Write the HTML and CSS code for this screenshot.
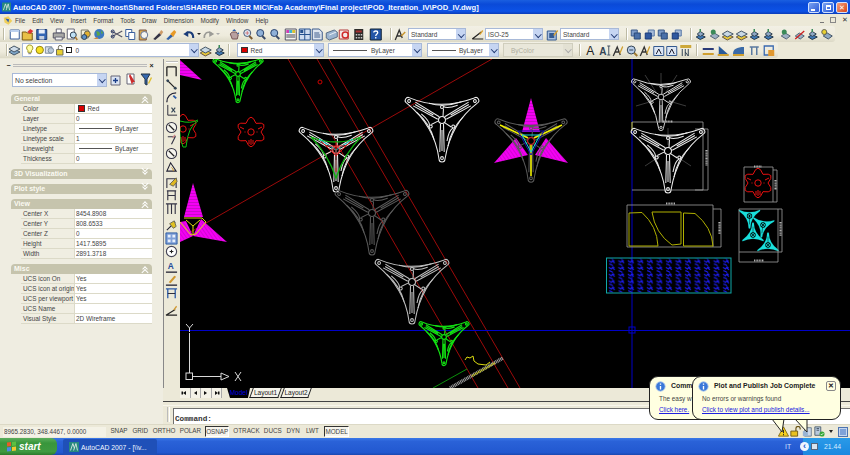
FILE: index.html
```html
<!DOCTYPE html>
<html lang="en">
<head>
<meta charset="utf-8">
<title>AutoCAD 2007</title>
<link rel="stylesheet" href="styles.css">
</head>
<body>
<svg class="defs" width="0" height="0">
  <defs>
    <symbol id="new" viewBox="0 0 13 13"><path d="M2 2h9v9H2z" fill="#fff" stroke="#3a5f9e"/><path d="M2 2h9v2H2z" fill="#bcd0ee"/></symbol>
    <symbol id="open" viewBox="0 0 13 13"><path d="M1 4h4l1 1h5v7H1z" fill="#e8c048" stroke="#7a5a10"/><path d="M6 4l3-3 3 2-3 3z" fill="#d33"/></symbol>
    <symbol id="save" viewBox="0 0 13 13"><path d="M1.500 1.500h10v10h-10z" fill="#3466b4" stroke="#1d3c78"/><path d="M3.500 1.500h6v4h-6z" fill="#e8eef8"/><path d="M4 8h5v3.500H4z" fill="#c5cfdf"/></symbol>
    <symbol id="plot" viewBox="0 0 13 13"><path d="M4 1h5v4H4z" fill="#fff" stroke="#667"/><path d="M1 5h11v5H1z" fill="#a9a9a6" stroke="#556"/><path d="M3 9h7v3H3z" fill="#eee" stroke="#667"/></symbol>
    <symbol id="prev" viewBox="0 0 13 13"><path d="M2 1h7v10H2z" fill="#fff" stroke="#667"/><circle cx="8" cy="7" r="3" fill="#bfe0f5" stroke="#345"/><path d="M10 9l2 3" stroke="#a73" stroke-width="1.500"/></symbol>
    <symbol id="pub" viewBox="0 0 13 13"><path d="M2 2h7v8H2z" fill="#f3f0d8" stroke="#776"/><circle cx="8" cy="6" r="3" fill="#e0b030" stroke="#665"/><circle cx="5" cy="9" r="2.500" fill="#5a90c8" stroke="#345"/></symbol>
    <symbol id="globe" viewBox="0 0 13 13"><circle cx="7" cy="6" r="5" fill="#3c78c0"/><path d="M4 3l3 1 1 3-3 1zM9 2l2 3-2 1z" fill="#5ca648"/><path d="M1 11l4-2 1 2z" fill="#c84"/></symbol>
    <symbol id="cut" viewBox="0 0 13 13"><path d="M1 3l11 6M1 9l11-6" stroke="#556" stroke-width="1.200"/><circle cx="2.500" cy="3.500" r="1.500" fill="none" stroke="#236"/><circle cx="2.500" cy="8.500" r="1.500" fill="none" stroke="#236"/></symbol>
    <symbol id="copy" viewBox="0 0 13 13"><path d="M1.500 1.500h6v7h-6z" fill="#fff" stroke="#3a5f9e"/><path d="M4.500 4.500h6v7h-6z" fill="#fff" stroke="#3a5f9e"/></symbol>
    <symbol id="paste" viewBox="0 0 13 13"><path d="M2 2h7v10H2z" fill="#d9a84c" stroke="#754"/><circle cx="7" cy="7" r="3.500" fill="#f4f4f0" stroke="#679"/></symbol>
    <symbol id="brush" viewBox="0 0 13 13"><path d="M2 11l6-6 2 2-6 5z" fill="#334"/><path d="M8 5l2-3 2 2-2 3z" fill="#c96"/></symbol>
    <symbol id="block" viewBox="0 0 13 13"><path d="M2 11l5-5 2 2-5 4z" fill="#2f5fa8"/><path d="M6 6l4-4 2 2-3 5z" fill="#e89a28"/></symbol>
    <symbol id="undo" viewBox="0 0 13 13"><path d="M11 10C11 5 8 3 4 5" fill="none" stroke="#1a3c78" stroke-width="2"/><path d="M1 6l5-3 0 6z" fill="#1a3c78"/></symbol>
    <symbol id="redo" viewBox="0 0 13 13"><path d="M2 10C2 5 5 3 9 5" fill="none" stroke="#9b9b96" stroke-width="1.600"/><path d="M12 6L7 3l0 6z" fill="#9b9b96"/></symbol>
    <symbol id="pan" viewBox="0 0 13 13"><path d="M3 6l2-2 4 0 2 3-1 4H5z" fill="#b8a0a0" stroke="#755"/><path d="M7 1l2 2H5zM11 4l1 2-2 0z" fill="#2f5fa8"/></symbol>
    <symbol id="zoom" viewBox="0 0 13 13"><circle cx="6" cy="5" r="3.500" fill="#dce8f4" stroke="#4a5a78"/><path d="M8 8l3 3" stroke="#7a5a30" stroke-width="2"/><path d="M4 5h4M6 3v4" stroke="#c44" stroke-width=".6"/></symbol>
    <symbol id="zoomb" viewBox="0 0 13 13"><circle cx="6" cy="5" r="3.500" fill="#8fb0d8" stroke="#29436e"/><path d="M8 8l3 3" stroke="#3a4a68" stroke-width="2"/></symbol>
    <symbol id="props" viewBox="0 0 13 13"><path d="M1 1h11v11H1z" fill="#f5f5f0" stroke="#556"/><path d="M2 2h3v3H2z" fill="#d23bb4"/><path d="M5 2h3v3H5z" fill="#3bb4d2"/><path d="M8 2h3v3H8z" fill="#d8c030"/><path d="M2 7h9M2 9h9" stroke="#445"/></symbol>
    <symbol id="grid" viewBox="0 0 13 13"><path d="M1 1h11v11H1z" fill="#cfdcf0" stroke="#26508e"/><path d="M6.500 1v11M1 6.500h11" stroke="#26508e"/><path d="M2 2h3v3H2z" fill="#26508e"/></symbol>
    <symbol id="sheet" viewBox="0 0 13 13"><path d="M1 1h7l3 3v8H1z" fill="#dfe6f0" stroke="#3d5a8a"/><path d="M3 5h5M3 7h6M3 9h6" stroke="#3d5a8a"/></symbol>
    <symbol id="set" viewBox="0 0 13 13"><path d="M1 5l8-3 3 2v5l-8 3-3-2z" fill="#9cb4d0" stroke="#5a6f88"/><path d="M4 7l7-3" stroke="#e8eef4"/></symbol>
    <symbol id="mark" viewBox="0 0 13 13"><path d="M1 2h9v9H1z" fill="#f4e8e8" stroke="#b03a3a"/><circle cx="7" cy="7" r="3" fill="none" stroke="#d02a2a" stroke-width="1.500"/></symbol>
    <symbol id="calc" viewBox="0 0 13 13"><path d="M2 1h9v11H2z" fill="#2d2d2a"/><path d="M3.500 2.500h6v2h-6z" fill="#a83030"/><path d="M3.500 6h1.500v1.500H3.500zM6 6h1.500v1.500H6zM8.500 6H10v1.500H8.500zM3.500 9h1.500v1.500H3.500zM6 9h1.500v1.500H6zM8.500 9H10v1.500H8.500z" fill="#ccc"/></symbol>
    <symbol id="help" viewBox="0 0 13 13"><path d="M1 1h11v11H1z" fill="#2456a8" stroke="#123"/><path d="M4.500 4.500C4.500 2.500 8.500 2.500 8.500 4.500 8.500 6 6.500 6 6.500 8M6.500 9v1.500" fill="none" stroke="#fff" stroke-width="1.300"/></symbol>
    <symbol id="tstyle" viewBox="0 0 13 13"><path d="M2 12L6 2l3 8M4 8h4" fill="none" stroke="#333" stroke-width="1.300"/><path d="M8 8l4-4" stroke="#c8942c" stroke-width="1.500"/></symbol>
    <symbol id="dstyle" viewBox="0 0 13 13"><path d="M1 11l9-7M1 11h11" stroke="#222" stroke-width="1.200"/><path d="M8 6l3-4 1 1-3 4z" fill="#d8a030"/></symbol>
    <symbol id="tbstyle" viewBox="0 0 13 13"><path d="M1 3h9v9H1z" fill="#a9c0e0" stroke="#345a90"/><path d="M3 5h5v5H3z" fill="#345a90"/><path d="M7 7l4-5 1 1-4 5z" fill="#d8a030"/></symbol>
    <symbol id="order" viewBox="0 0 13 13"><path d="M2 2h6v6H2z" fill="#7e9cc8" stroke="#3a5a8a"/><path d="M5 5h6v6H5z" fill="#4a70a8" stroke="#2a4a7a"/></symbol>
    <symbol id="order2" viewBox="0 0 13 13"><path d="M5 2h6v6H5z" fill="#a8bcd8" stroke="#5a7aa8"/><path d="M2 5h6v6H2z" fill="#2f58a0" stroke="#1a3a78"/></symbol>
    <symbol id="lyr" viewBox="0 0 13 13"><path d="M1 8l5-3 6 3-6 3z" fill="#7ea6c8" stroke="#456"/><path d="M1 5l5-3 6 3-6 3z" fill="#cfdce8" stroke="#456"/></symbol>
    <symbol id="lyr2" viewBox="0 0 13 13"><path d="M1 9l5-3 6 3-6 3z" fill="#e8c838" stroke="#654"/><path d="M1 6l5-3 6 3-6 3z" fill="#c8d8e4" stroke="#456"/></symbol>
    <symbol id="lyr3" viewBox="0 0 13 13"><path d="M2 9l4-2.500 5 2.500-5 2.500z" fill="#3f7ab8" stroke="#234"/><path d="M3 6l3-2.500 4 2.500-4 2.500z" fill="#8ea8c4" stroke="#345"/><path d="M6 1v3" stroke="#3a8a58" stroke-width="1.500"/></symbol>
    <symbol id="lyrg" viewBox="0 0 13 13"><path d="M2 8l4-3 5 3-4 3z" fill="#9db0c4" stroke="#567"/><circle cx="5" cy="4" r="2.500" fill="#3a8a58"/></symbol>
    <symbol id="lyrr" viewBox="0 0 13 13"><path d="M2 8l4-3 5 3-4 3z" fill="#9db0c4" stroke="#567"/><path d="M2 11l9-8" stroke="#d02020" stroke-width="1.300"/></symbol>
    <symbol id="lyry" viewBox="0 0 13 13"><path d="M3 8l4-3 5 3-4 3z" fill="#8ea8c4" stroke="#456"/><circle cx="4" cy="4" r="2.500" fill="#e8d030" stroke="#665"/></symbol>
    <symbol id="bulb" viewBox="0 0 9 13"><path d="M4.500 1a3.300 3.300 0 0 1 2 6v2h-4V7a3.300 3.300 0 0 1 2-6z" fill="#ffffa0" stroke="#9a9020"/><path d="M3 10.500h3" stroke="#667"/></symbol>
    <symbol id="sun" viewBox="0 0 10 13"><circle cx="5" cy="6.500" r="4" fill="#f6e020" stroke="#8a7a10"/></symbol>
    <symbol id="vp" viewBox="0 0 11 13"><path d="M1 3h7v7H1z" fill="#d8dfe8" stroke="#789"/><circle cx="7" cy="7" r="3" fill="#b8c8d8" stroke="#789"/></symbol>
    <symbol id="lock" viewBox="0 0 9 13"><path d="M1 6h7v6H1z" fill="#e8d030" stroke="#665"/><path d="M3 6V3.500a2 2 0 0 1 4 0" fill="none" stroke="#665"/></symbol>
    <symbol id="ta" viewBox="0 0 13 13"><text x="2" y="11" class="ic-t">A</text></symbol>
    <symbol id="tai" viewBox="0 0 13 13"><text x="1" y="11" class="ic-t ic-t-b">A</text><path d="M9 2h3M10.500 2v9M9 11h3" stroke="#456" fill="none"/></symbol>
    <symbol id="tae" viewBox="0 0 13 13"><path d="M2 12L6 3l3 8M4 8h4" fill="none" stroke="#333" stroke-width="1.300"/><path d="M8 9l3-7 1 1-3 7z" fill="#d0a030"/></symbol>
    <symbol id="tfind" viewBox="0 0 13 13"><circle cx="6" cy="6" r="4" fill="#b8cce8" stroke="#345"/><path d="M9 9l3 3" stroke="#a07a30" stroke-width="2"/><path d="M4 6h4" stroke="#345"/></symbol>
    <symbol id="tsc" viewBox="0 0 13 13"><path d="M1.500 2.500h10v9h-10z" fill="#dce6f4" stroke="#345a90"/><path d="M4 10l2.500-5 2.500 5" fill="none" stroke="#223"/></symbol>
    <symbol id="tjust" viewBox="0 0 13 13"><path d="M1 1h11v3H1z" fill="#cda83a"/><path d="M3 12V5M6 5v7M9 12V5" stroke="#345" fill="none"/><path d="M6 8l3 4" stroke="#345"/></symbol>
    <symbol id="dimb" viewBox="0 0 13 13"><path d="M1 4h11v2H1z" fill="#2a3a78"/><path d="M1 9h11v2H1z" fill="#d0a030"/></symbol>
    <symbol id="dimt" viewBox="0 0 13 13"><path d="M2 10V2l9 8z" fill="#2a5a98"/><path d="M1 10h11v2H1z" fill="#d0a030"/></symbol>
    <symbol id="dimu" viewBox="0 0 13 13"><path d="M1 10c0-5 4-7 11-7v7z" fill="#3a6aa8"/><path d="M1 10h11v2H1z" fill="#d0a030"/></symbol>
    <symbol id="dimg" viewBox="0 0 13 13"><path d="M2 3h9M4 3v8M9 3v8" stroke="#5a7aa0" stroke-width="1.500"/></symbol>
    <symbol id="dimo" viewBox="0 0 13 13"><path d="M2 2h9v9H2z" fill="none" stroke="#3a6ab0" stroke-width="1.300"/><path d="M6 6h6v6H6z" fill="#e09830"/></symbol>
    <symbol id="vd" viewBox="0 0 14 14"><path d="M2 2h10M2 12V2M12 12V2" fill="none" stroke="#222" stroke-width="1.400"/></symbol>
    <symbol id="va" viewBox="0 0 14 14"><path d="M2 2l10 10" stroke="#222" stroke-width="1.400"/><circle cx="3" cy="3" r="1.500" fill="#345"/><circle cx="11" cy="11" r="1.500" fill="#345"/></symbol>
    <symbol id="varc" viewBox="0 0 14 14"><path d="M2 12C2 6 6 2 12 2" fill="none" stroke="#223" stroke-width="1.400"/><path d="M9 5l3 3" stroke="#2a5aa8" stroke-width="2"/></symbol>
    <symbol id="vxy" viewBox="0 0 14 14"><path d="M3 1v11h10" fill="none" stroke="#223"/><path d="M7 4l4 5M11 4l-4 5" stroke="#345" stroke-width="1.200"/></symbol>
    <symbol id="vr" viewBox="0 0 14 14"><circle cx="7" cy="7" r="5.500" fill="#f6f5ee" stroke="#334" stroke-width="1.100"/><path d="M4 4l6 6" stroke="#222" stroke-width="1.300"/></symbol>
    <symbol id="vj" viewBox="0 0 14 14"><path d="M3 3l8 0-4 8" fill="none" stroke="#334" stroke-width="1.200"/><path d="M11 1l-3 3" stroke="#c88" stroke-width="1.500"/></symbol>
    <symbol id="vang" viewBox="0 0 14 14"><path d="M2 12h10L6 3z" fill="none" stroke="#223" stroke-width="1.200"/><path d="M9 12c0-2-1-3-2-4" fill="none" stroke="#c89020"/></symbol>
    <symbol id="vq" viewBox="0 0 14 14"><path d="M2 13V3h10v10" fill="none" stroke="#334" stroke-width="1.200"/><path d="M5 9l7-7 1 4-4 5z" fill="#e0b820" stroke="#665"/></symbol>
    <symbol id="vb" viewBox="0 0 14 14"><path d="M2 2h10M3 2v10M11 2v10M3 7h8" fill="none" stroke="#334" stroke-width="1.200"/></symbol>
    <symbol id="vc" viewBox="0 0 14 14"><path d="M1 2h12M3 2v11M7 2v11M11 2v11" fill="none" stroke="#334" stroke-width="1.200"/></symbol>
    <symbol id="vy" viewBox="0 0 14 14"><path d="M2 12L11 3" stroke="#223" stroke-width="1.200"/><path d="M5 5l5-3 2 6-3 2z" fill="#e0c020" stroke="#665"/></symbol>
    <symbol id="vbl" viewBox="0 0 14 14"><path d="M1 1h12v12H1z" fill="#7fa0d8" stroke="#2a5aa0"/><path d="M3 3h3v3H3zM8 3h3v3H8zM3 8h3v3H3zM8 8h3v3H8z" fill="#e8f0fc"/></symbol>
    <symbol id="vcen" viewBox="0 0 14 14"><circle cx="7" cy="7" r="5.500" fill="#fff" stroke="#445" stroke-width="1.200"/><path d="M5 7h4M7 5v4" stroke="#222" stroke-width="1.200"/></symbol>
    <symbol id="vtxt" viewBox="0 0 14 14"><text x="3" y="9" class="ic-t ic-t-blue">A</text><path d="M1 12h12" stroke="#223" stroke-width="1.400"/></symbol>
    <symbol id="vtol" viewBox="0 0 14 14"><path d="M1 12h12" stroke="#223" stroke-width="1.400"/><path d="M4 9l6-7 2 1-6 7z" fill="#d09830"/></symbol>
    <symbol id="vupd" viewBox="0 0 14 14"><path d="M1 2h12M3 2v10M11 2v10" fill="none" stroke="#2a5aa8" stroke-width="1.400"/><path d="M3 7h8" stroke="#223"/></symbol>
    <symbol id="vst" viewBox="0 0 14 14"><path d="M1 12l10-6M1 12h12" stroke="#222" stroke-width="1.300"/><path d="M9 6l3-4 1 1-3 4z" fill="#d09830"/></symbol>
    <symbol id="pickadd" viewBox="0 0 13 13"><path d="M1 3h9v9H1z" fill="#dbe4f2" stroke="#667"/><path d="M3 7.500h5M5.500 5v5" stroke="#1b3f88" stroke-width="1.300"/></symbol>
    <symbol id="qsel" viewBox="0 0 13 13"><path d="M2 1h7v10H2z" fill="#fff" stroke="#667"/><path d="M5 1l5 8-2 0-1 3-3-9z" fill="#cc2a2a"/></symbol>
    <symbol id="filter" viewBox="0 0 13 13"><path d="M1 1h9L7 6v6l-2-1V6z" fill="#3568b0" stroke="#234"/><path d="M8 10l3-6 1 1-3 6z" fill="#e0c030"/></symbol>
    <symbol id="warn" viewBox="0 0 13 13"><path d="M6.500 1l6 11H.5z" fill="#f6d020" stroke="#7a6210"/><path d="M6.500 4.500v4M6.500 9.500v1.500" stroke="#222" stroke-width="1.100"/></symbol>
    <symbol id="trlock" viewBox="0 0 13 13"><path d="M1 6h8v6H1z" fill="#e8c020" stroke="#665010"/><path d="M7 6V3a2.500 2.500 0 0 1 5 0v1" fill="none" stroke="#665010" stroke-width="1.300"/></symbol>
    <symbol id="trplot" viewBox="0 0 13 13"><path d="M3 2h8v10H3z" fill="#c9d6e8" stroke="#678"/><path d="M1 6h6v6H1z" fill="#98b4d4"/></symbol>
    <symbol id="trok" viewBox="0 0 13 13"><path d="M1 1h7v10H1z" fill="#b8c8dc" stroke="#456"/><path d="M3 3h3M3 5h3" stroke="#345"/><circle cx="9.500" cy="9.500" r="3" fill="#38a838"/><path d="M8 9.500l1 1 2-2" fill="none" stroke="#fff"/></symbol>
    <symbol id="info" viewBox="0 0 13 13"><circle cx="6.500" cy="6.500" r="5.500" fill="#3a78d8" stroke="#a8c4ee"/><path d="M6.500 3v1.500M6.500 6v4" stroke="#fff" stroke-width="1.600"/></symbol>
    <symbol id="acad" viewBox="0 0 13 13"><path d="M0 0h13v13H0z" fill="#27897f"/><path d="M2 11l3-9 2 6M6 11l3-9 2 9" fill="none" stroke="#e6efe8" stroke-width="1.100"/></symbol>
    <symbol id="acadm" viewBox="0 0 13 13"><path d="M1 3l6-2 5 6-5 5-5-3z" fill="#f0cf5a"/><path d="M3 4l5 1-1 4z" fill="#3464ac"/></symbol>
    <pattern id="hatch" width="3" height="3" patternUnits="userSpaceOnUse"><rect width="3" height="3" fill="#f400f4"/><path d="M0 1.500h3" stroke="#a010a0" stroke-width=".5"/></pattern>
    <pattern id="hatch2" width="3" height="3" patternUnits="userSpaceOnUse" patternTransform="rotate(55)"><rect width="3" height="3" fill="#f400f4"/><path d="M0 1.500h3" stroke="#a010a0" stroke-width=".4"/></pattern>
    <pattern id="nest" x="608" y="259.500" width="9.520" height="6.700" patternUnits="userSpaceOnUse"><path d="M.8 1.200l2.500 1.600 1-1.400 2.400 2.300M1.200 4.400l2.100.8 1.600 1M4.700.6l1.600 1.100" fill="none" stroke="#1c1cf0" stroke-width="1.100"/></pattern>
    <g id="arm">
      <path d="M-3 39A3 3 0 0 0 3 39Q9 3 35.300-16.900"/>
      <circle cy="38" r="1.400"/>
      <path d="M-2.200 32L-1.500 4M2.200 32L1.500 4M0 10V31"/>
      <circle cy="-13" r="1.500"/>
      <path d="M5 21Q7 10 11 8M1-3.500L1.500-11.500M6 26Q9 9 21-3"/>
    </g>
    <g id="star" fill="none" stroke="currentColor">
      <use href="#arm"/>
      <use href="#arm" transform="rotate(120)"/>
      <use href="#arm" transform="rotate(-120)"/>
      <circle r="3.500"/>
    </g>
    <g id="flower" fill="none" stroke="currentColor" stroke-width="1">
      <path d="M-5-8.660Q0-21 5-8.660Q18.200-10.500 10 0Q18.200 10.500 5 8.660Q0 21-5 8.660Q-18.200 10.500-10 0Q-18.200-10.500-5-8.660Z"/>
      <circle r="3.200"/>
      <path d="M0 7V13M-2 8V12M2 8V12M-11-5L-7-3M11-5L7-3M-6.500 0h1M5.500 0h1"/>
    </g>
    <g id="cstar" fill="#19e0dc" stroke="#19e0dc" stroke-width=".4">
      <path d="M-3 39A3 3 0 0 0 3 39Q3 6 35.300-16.900L35.300-21Q0-4-35.300-21L-35.300-16.900Q-3 6-3 39Z"/>
      <circle r="9" fill="#000" stroke="none"/>
      <circle r="5" fill="none" stroke-width="3"/>
      <path d="M0 5V28" stroke="#000" stroke-width="1.500"/>
    </g>
  </defs>
</svg>

<div class="app">
  <header class="titlebar">
    <svg class="title-icon"><use href="#acad"/></svg>
    <span class="title-text">AutoCAD 2007 - [\\vmware-host\Shared Folders\SHARED FOLDER MIC\Fab Academy\Final project\POD_Iteration_IV\POD_IV.dwg]</span>
    <div class="winbtns">
      <span class="winbtn"><i class="g-min"></i></span>
      <span class="winbtn"><i class="g-res"></i></span>
      <span class="winbtn winbtn-close">✕</span>
    </div>
  </header>

  <nav class="menubar">
    <svg class="menu-icon"><use href="#acadm"/></svg>
    <span class="mi m1">File</span><span class="mi">Edit</span><span class="mi">View</span><span class="mi">Insert</span><span class="mi">Format</span><span class="mi">Tools</span><span class="mi">Draw</span><span class="mi">Dimension</span><span class="mi">Modify</span><span class="mi">Window</span><span class="mi">Help</span>
    <div class="mdi"><i class="m-min"></i><i class="m-res"></i><span class="m-x">✕</span></div>
  </nav>

  <div class="tbrow tb1">
    <div class="tband tband1">
      <i class="handle"></i>
      <div class="g g-a"><svg class="ic"><use href="#new"/></svg><svg class="ic"><use href="#open"/></svg><svg class="ic"><use href="#save"/></svg></div>
      <div class="g g-b"><svg class="ic"><use href="#plot"/></svg><svg class="ic"><use href="#prev"/></svg><svg class="ic"><use href="#pub"/></svg><svg class="ic"><use href="#globe"/></svg></div>
      <div class="g g-c"><svg class="ic"><use href="#cut"/></svg><svg class="ic"><use href="#copy"/></svg><svg class="ic"><use href="#paste"/></svg><svg class="ic"><use href="#brush"/></svg><svg class="ic"><use href="#block"/></svg></div>
      <div class="g g-c"><svg class="ic"><use href="#undo"/></svg><i class="drop"></i><svg class="ic"><use href="#redo"/></svg><i class="drop drop-off"></i></div>
      <div class="g g-d"><svg class="ic"><use href="#pan"/></svg><svg class="ic"><use href="#zoom"/></svg><svg class="ic"><use href="#zoomb"/></svg><svg class="ic"><use href="#zoomb"/></svg></div>
      <div class="g g-e"><svg class="ic"><use href="#props"/></svg><svg class="ic"><use href="#grid"/></svg><svg class="ic"><use href="#sheet"/></svg><svg class="ic"><use href="#set"/></svg><svg class="ic"><use href="#mark"/></svg><svg class="ic"><use href="#calc"/></svg></div>
      <div class="g g-e2"><svg class="ic"><use href="#help"/></svg></div>
      <i class="handle handle-f"></i>
      <div class="g g-s"><svg class="ic"><use href="#tstyle"/></svg></div>
      <div class="combo w58 ml1"><span class="combo-t">Standard</span><i class="arrow"></i></div>
      <div class="g g-s2"><svg class="ic"><use href="#dstyle"/></svg></div>
      <div class="combo w58 ml05"><span class="combo-t">ISO-25</span><i class="arrow"></i></div>
      <div class="g g-s3"><svg class="ic"><use href="#tbstyle"/></svg></div>
      <div class="combo w59 ml05"><span class="combo-t">Standard</span><i class="arrow"></i></div>
      <i class="handle handle-g"></i>
      <div class="g g-t"><svg class="ic"><use href="#order"/></svg><svg class="ic"><use href="#order2"/></svg><svg class="ic"><use href="#order"/></svg><svg class="ic"><use href="#order2"/></svg></div>
      <i class="handle handle-h"></i>
      <div class="g g-t2"><svg class="ic"><use href="#lyr3"/></svg><svg class="ic"><use href="#lyrg"/></svg><svg class="ic"><use href="#lyr2"/></svg><svg class="ic"><use href="#lyr2"/></svg><svg class="ic"><use href="#lyr3"/></svg><svg class="ic"><use href="#lyr3"/></svg></div>
      <div class="g g-u"><svg class="ic"><use href="#lyrg"/></svg><svg class="ic"><use href="#lyrr"/></svg><svg class="ic"><use href="#lyr3"/></svg><svg class="ic"><use href="#lyry"/></svg></div>
    </div>
  </div>

  <div class="tbrow tb2">
    <div class="tband tband2">
      <i class="handle handle-i"></i>
      <svg class="ic ic-l"><use href="#lyr"/></svg>
      <div class="combo w177">
        <svg class="li li9"><use href="#bulb"/></svg><svg class="li li9"><use href="#sun"/></svg><svg class="li li11"><use href="#vp"/></svg><svg class="li li9"><use href="#lock"/></svg><i class="sw-w"></i><span class="combo-t z">0</span><i class="arrow"></i>
      </div>
      <svg class="ic"><use href="#lyr2"/></svg><svg class="ic"><use href="#lyr3"/></svg>
      <i class="handle handle-j"></i>
      <div class="combo w87 ml7"><i class="sw-r"></i><span class="combo-t">Red</span><i class="arrow"></i></div>
      <div class="combo w94 ml4"><i class="lt"></i><span class="combo-t">ByLayer</span><i class="arrow"></i></div>
      <div class="combo w72 ml5"><i class="lt lt-s"></i><span class="combo-t">ByLayer</span><i class="arrow"></i></div>
      <div class="combo combo-off w70 ml4"><span class="combo-t bc">ByColor</span><i class="arrow"></i></div>
      <i class="handle handle-k"></i>
      <div class="g g-v"><svg class="ic"><use href="#ta"/></svg><svg class="ic"><use href="#tai"/></svg><svg class="ic"><use href="#tae"/></svg><svg class="ic"><use href="#tfind"/></svg><svg class="ic"><use href="#tae"/></svg><svg class="ic"><use href="#tsc"/></svg><svg class="ic"><use href="#tsc"/></svg><svg class="ic"><use href="#tjust"/></svg></div>
      <i class="handle handle-l"></i>
      <div class="g g-w"><svg class="ic ic-w"><use href="#dimb"/></svg><svg class="ic ic-w"><use href="#dimt"/></svg><svg class="ic ic-w2"><use href="#dimu"/></svg><svg class="ic ic-w"><use href="#dimg"/></svg><svg class="ic"><use href="#dimo"/></svg></div>
    </div>
  </div>

  <div class="main">
    <aside class="panel">
      <div class="panel-top"><i class="pb">−</i><i class="pbar"></i><i class="pb px">×</i></div>
      <div class="panel-sel">
        <div class="combo w95 sel"><span class="combo-t">No selection</span><i class="arrow"></i></div>
        <svg class="pbtn"><use href="#pickadd"/></svg><svg class="pbtn"><use href="#qsel"/></svg><svg class="pbtn"><use href="#filter"/></svg>
      </div>

      <section class="sec">
        <h3 class="sec-h">General<i class="chev chev-up"></i></h3>
        <div class="row"><span class="k">Color</span><span class="v"><i class="sw-r sw-p"></i>Red</span></div>
        <div class="row"><span class="k">Layer</span><span class="v">0</span></div>
        <div class="row"><span class="k">Linetype</span><span class="v"><i class="lt lt-p"></i>ByLayer</span></div>
        <div class="row"><span class="k">Linetype scale</span><span class="v">1</span></div>
        <div class="row"><span class="k">Lineweight</span><span class="v"><i class="lt lt-p"></i>ByLayer</span></div>
        <div class="row"><span class="k">Thickness</span><span class="v">0</span></div>
      </section>
      <section class="sec"><h3 class="sec-h">3D Visualization<i class="chev chev-dn"></i></h3></section>
      <section class="sec"><h3 class="sec-h">Plot style<i class="chev chev-dn"></i></h3></section>
      <section class="sec">
        <h3 class="sec-h">View<i class="chev chev-up"></i></h3>
        <div class="row"><span class="k">Center X</span><span class="v">8454.8908</span></div>
        <div class="row"><span class="k">Center Y</span><span class="v">808.6533</span></div>
        <div class="row"><span class="k">Center Z</span><span class="v">0</span></div>
        <div class="row"><span class="k">Height</span><span class="v">1417.5895</span></div>
        <div class="row"><span class="k">Width</span><span class="v">2891.3718</span></div>
      </section>
      <section class="sec">
        <h3 class="sec-h">Misc<i class="chev chev-up"></i></h3>
        <div class="row"><span class="k">UCS icon On</span><span class="v">Yes</span></div>
        <div class="row"><span class="k">UCS icon at origin</span><span class="v">Yes</span></div>
        <div class="row"><span class="k">UCS per viewport</span><span class="v">Yes</span></div>
        <div class="row"><span class="k">UCS Name</span><span class="v"></span></div>
        <div class="row"><span class="k">Visual Style</span><span class="v">2D Wireframe</span></div>
      </section>
    </aside>

    <div class="work">
      <div class="work-top">
        <div class="vtools">
          <i class="vhandle"></i>
          <div class="vg vg1"><svg class="vic"><use href="#vd"/></svg><svg class="vic"><use href="#va"/></svg><svg class="vic"><use href="#varc"/></svg><svg class="vic"><use href="#vxy"/></svg></div>
          <div class="vg vg2"><svg class="vic"><use href="#vr"/></svg><svg class="vic"><use href="#vj"/></svg><svg class="vic"><use href="#vr"/></svg><svg class="vic"><use href="#vang"/></svg></div>
          <div class="vg vg3"><svg class="vic"><use href="#vq"/></svg><svg class="vic"><use href="#vb"/></svg><svg class="vic"><use href="#vc"/></svg></div>
          <div class="vg vg4"><svg class="vic"><use href="#vy"/></svg><svg class="vic"><use href="#vbl"/></svg><svg class="vic"><use href="#vcen"/></svg></div>
          <div class="vg vg5"><svg class="vic"><use href="#vtxt"/></svg><svg class="vic"><use href="#vtol"/></svg><svg class="vic"><use href="#vupd"/></svg></div>
          <div class="vg vg6"><svg class="vic"><use href="#vst"/></svg></div>
        </div>
        <div class="drawing">
          <svg class="canvas" viewBox="180 59 670 329">
            <g class="red-lines">
              <path d="M288 59L478 388M317 59L508 388M329 59L520 388M180 238L492 59"/>
            </g>
            <path class="blue-line" d="M632 59V388M180 330.500H850"/>
            <rect class="blue-sq" x="629" y="327" width="6" height="6"/>
            <circle class="red-dot" cx="320" cy="82" r="2"/>

            <path class="mag" d="M180 60L202 80L180 75Z"/>
            <use href="#star" class="c-green" transform="translate(238 74) scale(.68)"/>
            <use href="#flower" class="c-red" transform="translate(183 129)"/>
            <path class="gr-arc" d="M198 121Q188 126 186 147L183 147Q179 135 180 128M180 121Q190 124 198 120"/>
            <use href="#flower" class="c-red" transform="translate(251 132)"/>

            <path class="mag" d="M193 183L203 217H184Z"/>
            <path class="mag2" d="M180 222L186 221L193 236L180 242Z"/>
            <path class="mag2" d="M201 219L227 242L193 236Z"/>
            <path class="yel" d="M184 218L202 218L206 222L196 234L191 235L180 222M193 226V234M193 226L186 220M193 226L200 220"/>

            <use href="#star" class="c-white" transform="translate(336 150)"/>
            <g class="detail">
              <path class="l-green" d="M311 137Q336 147 361 137Q344 154 336 178Q328 154 311 137Z"/>
              <path class="l-cyan" d="M319 139L336 150L353 139M336 150V168"/>
              <path class="l-red" d="M321 141L336 156L351 141M326 146H346M336 142V172"/>
              <circle class="l-red" cx="336" cy="150" r="3.500"/>
            </g>
            <use href="#star" class="c-white" transform="translate(442 120)"/>
            <use href="#star" class="c-dim" transform="translate(372 213)"/>
            <use href="#star" class="c-grey" transform="translate(412 282)"/>
            <use href="#star" class="c-green" transform="translate(444 337) scale(.68)"/>

            <path class="mag" d="M531 98L540 132H522Z"/>
            <path class="mag2" d="M494 163L516 138L528 155Z"/>
            <path class="mag2" d="M568 163L546 138L535 155Z"/>
            <use href="#star" class="c-dim" transform="translate(531 141) scale(.98)"/>
            <path class="yel yel-w" d="M500 125L528 138M562 125L534 138M531 176V145"/>
            <path class="l-blue" d="M518 131H544L531 155Z"/>
            <path class="l-cyan" d="M522 135H540L531 152Z"/>
            <circle class="l-red" cx="531" cy="141" r="3.500"/>

            <path class="l-green2" d="M433 388L467 369"/>
            <path class="hatchbar" d="M450 388L503 358"/>
            <path class="yel-dash" d="M472 376L495 363"/>
            <path class="yel" d="M465 360L467 357L470 358L473 356L474 361L478 364L486 365L490 362"/>

            <g class="ucs">
              <path d="M189.500 333V373M193 376.500H221"/>
              <rect x="186" y="373" width="6.500" height="6.500"/>
              <path d="M221 373L229 376.500L221 380Z"/>
              <path d="M235 372L241 381M241 372L235 381"/>
              <path d="M186 324L189.500 328L193 324M189.500 328V332"/>
            </g>

            <path class="ray" d="M661 73V90M636 106L653 101M686 106L669 101M645 75L656 92M677 75L666 92"/>
            <use href="#star" class="c-white" transform="translate(661 97) scale(.8)"/>
            <path class="dim" d="M632 122H703M703 122V190M632 190H703M695 129H708V190H695"/>
            <path class="yel" d="M632 122V131"/>
            <path class="dimtxt" d="M706.500 150V166"/>
            <path class="dimtxt" d="M663 121.500H673"/>
            <path class="ray" d="M668 128V145M645 166L660 156M691 166L676 156"/>
            <use href="#star" class="c-white" transform="translate(668 151)"/>

            <use href="#flower" class="c-red" transform="translate(758 183)"/>
            <path class="dim" d="M744 167H773M744 167V202H773V167M773 170H777V202H773"/>
            <path class="dimtxt" d="M775.500 180V190"/>
            <path class="dimtxt" d="M754 166.500H762"/>

            <use href="#cstar" transform="translate(749.500 216) scale(.3)"/>
            <use href="#cstar" transform="translate(763 225) scale(.3) rotate(8)"/>
            <use href="#cstar" transform="translate(753 235) scale(.3) rotate(180)"/>
            <use href="#cstar" transform="translate(768 245) scale(.3) rotate(180)"/>
            <path class="dim" d="M739 209H778V252H739ZM778 209H782V252H778M739 252V262H778V252"/>
            <path class="dimtxt" d="M780.500 222V236"/>
            <path class="dimtxt" d="M754 260.500H764"/>

            <path class="dim" d="M627 205H713V247H627ZM713 209H721V247H713"/>
            <path class="dimtxt" d="M719.500 222V234"/>
            <path class="dimtxt" d="M666 203.500H675"/>
            <path class="olive" d="M629 213L642 212.500Q657 226 658 246H629Z"/>
            <path class="olive" d="M652 212L681 212V244L672 245Q655 233 652 212Z"/>
            <path class="olive" d="M683.500 213L695 213.500Q712 227 713 246H683.500Z"/>
            <rect class="nestfill" x="607" y="258.500" width="124" height="34"/>
            <rect class="nestbox" x="606.500" y="258" width="124.500" height="35"/>
          </svg>
        </div>
      </div>
      <div class="tabs">
        <div class="tabnav"><i class="navb"><b class="tri tri-l tri-bar"></b></i><i class="navb"><b class="tri tri-l"></b></i><i class="navb"><b class="tri tri-r"></b></i><i class="navb"><b class="tri tri-r tri-bar2"></b></i></div>
        <span class="tab tab-model">Model</span><span class="tab tab-l1">Layout1</span><span class="tab tab-l2">Layout2</span>
      </div>
      <div class="cmd">
        <i class="cmd-handle"></i>
        <div class="cmd-box">Command:</div>
      </div>
    </div>
  </div>

  <div class="status">
    <span class="coords">8965.2830, 348.4467, 0.0000</span>
    <span class="sb w18">SNAP</span><span class="sb w17">GRID</span><span class="sb w23">ORTHO</span><span class="sb w22">POLAR</span><span class="sb sb-on w24">OSNAP</span><span class="sb w27">OTRACK</span><span class="sb w18">DUCS</span><span class="sb w15">DYN</span><span class="sb w16">LWT</span><span class="sb sb-on w25">MODEL</span>
    <div class="tray-icons">
      <svg class="ti"><use href="#warn"/></svg><svg class="ti"><use href="#trlock"/></svg><svg class="ti"><use href="#trplot"/></svg><svg class="ti"><use href="#trok"/></svg><i class="drop drop-t"></i><i class="boxbtn"></i>
    </div>
  </div>

  <footer class="taskbar">
    <div class="start"><i class="flag"><b class="f1"></b><b class="f2"></b><b class="f3"></b><b class="f4"></b></i><span>start</span></div>
    <div class="task"><svg class="task-ic"><use href="#acad"/></svg><span>AutoCAD 2007 - [\\v...</span></div>
    <div class="lang">IT</div>
    <div class="tray"><i class="tray-arrow">‹</i><i class="tray-app"></i><span>21.44</span></div>
  </footer>

  <svg class="tails" viewBox="0 0 850 455">
    <path class="tail" d="M772 419L782 432L784 419"/>
    <path class="tail" d="M795 419L807 432L807 419"/>
  </svg>
  <div class="balloon b-back">
    <svg class="b-ic"><use href="#info"/></svg>
    <div class="b-title">Comm</div>
    <div class="b-msg">The easy w</div>
    <a class="b-link">Click here.</a>
  </div>
  <div class="balloon b-front">
    <svg class="b-ic"><use href="#info"/></svg>
    <div class="b-title">Plot and Publish Job Complete</div>
    <i class="b-close">✕</i>
    <div class="b-msg">No errors or warnings found</div>
    <a class="b-link">Click to view plot and publish details...</a>
  </div>
</div>
</body>
</html>
```

FILE: styles.css
```css
* { box-sizing: border-box; }
html, body { margin: 0; padding: 0; background: #ece9d8; }
body { font-family: "Liberation Sans", Arial, sans-serif; font-size: 6.5px; color: #333; }
i { font-style: normal; }
.defs { position: absolute; }

.app { position: relative; width: 850px; height: 455px; overflow: hidden; display: flex; flex-direction: column; background: #ece9d8; }

.titlebar { height: 14px; display: flex; align-items: center; padding-left: 2px; background: linear-gradient(#1a5fe0 0, #0a4ad8 30%, #0c52e6 80%, #0a3cb8 100%); color: #fff; }
.title-icon { width: 9px; height: 10px; flex: none; margin-right: 2px; }
.title-text { font-size: 7.6px; font-weight: 700; white-space: nowrap; color: #f4f8ff; }
.winbtns { margin-left: auto; display: flex; gap: 2px; padding-right: 2px; }
.winbtn { width: 12px; height: 11px; border: 1px solid #cfe0ff; border-radius: 2px; background: linear-gradient(135deg, #7aa2f0, #2a5ad8); color: #fff; font-size: 7px; line-height: 9px; text-align: center; position: relative; display: block; }
.winbtn-close { background: linear-gradient(135deg, #f0a080, #d84818); }
.g-min { position: absolute; left: 2px; bottom: 1px; width: 4px; height: 2px; background: #fff; }
.g-res { position: absolute; left: 3px; top: 2px; width: 5px; height: 5px; border: 1px solid #fff; border-top-width: 2px; }

.menubar { height: 12px; display: flex; align-items: center; position: relative; font-size: 6.3px; color: #3a3a3a; }
.menu-icon { width: 10px; height: 11px; margin-left: 3px; flex: none; }
.mi { margin-left: 7px; white-space: nowrap; }
.m1 { margin-left: 2px; }
.mdi { margin-left: auto; display: flex; align-items: center; gap: 6px; padding-right: 2px; }
.m-min { width: 4px; height: 1px; background: #777; margin-top: 4px; }
.m-res { width: 6px; height: 6px; border: 1px solid #888; }
.m-x { font-size: 6.5px; color: #333; }

.tbrow { height: 16px; display: flex; }
.tband { height: 16px; display: flex; align-items: center; background: linear-gradient(#f2f0e5, #eeebdc 60%, #dcd9c6); border-radius: 0 3px 3px 0; }
.tband1 { width: 835px; padding-left: 3px; }
.tband2 { width: 778px; padding-left: 3px; }
.handle { width: 2px; height: 12px; flex: none; border-left: 1px solid #bdbaa4; border-right: 1px solid #fff; margin-right: 2.500px; }
.handle-f { margin-left: 7.250px; margin-right: 0; }
.handle-g { margin-left: 7px; margin-right: 0; }
.handle-h { margin-left: 6.750px; margin-right: 0; }
.handle-i { margin-left: 3px; margin-right: 0; }
.handle-j { margin-left: 2px; margin-right: 0; }
.handle-k { margin-left: 6px; margin-right: 0; }
.handle-l { margin-left: 4px; margin-right: 0; }

.g { display: flex; align-items: center; flex: none; }
.ic { width: 13.500px; height: 13px; flex: none; display: block; }
.ic-l { width: 13px; margin-right: 1px; }
.g-a { margin-left: 0; }
.g-b { margin-left: 3.500px; }
.g-c { margin-left: 4.500px; }
.g-d { margin-left: 6.250px; }
.g-e { margin-left: 3px; }
.g-e2 { margin-left: 4px; }
.g-s { margin-left: 1.250px; }
.g-s2 { margin-left: 5px; }
.g-s3 { margin-left: 3px; }
.g-t { margin-left: 1.250px; }
.g-t2 { margin-left: 2.250px; }
.g-u { margin-left: 4px; }
.g-v { margin-left: 3.250px; }
.g-w { margin-left: 3px; }
.ic-w { width: 14.500px; }
.ic-w2 { width: 17px; }
.drop { width: 0; height: 0; flex: none; margin: 0 1px; border-left: 2px solid transparent; border-right: 2px solid transparent; border-top: 2px solid #222; display: block; }
.drop-off { border-top-color: #aaa; }
.ic-t { font-family: "Liberation Sans", Arial, sans-serif; font-size: 12px; fill: #222; }
.ic-t-b { font-weight: 700; fill: #345; font-size: 10px; }
.ic-t-blue { fill: #234a98; font-weight: 700; font-size: 9px; }

.combo { height: 12px; flex: none; display: flex; align-items: center; background: #fff; border: 1px solid #a8b9d8; position: relative; font-size: 6.5px; color: #444; padding-left: 2px; }
.tb2 .combo { height: 13.500px; }
.combo-t { white-space: nowrap; }
.arrow { margin-left: auto; width: 9px; align-self: stretch; flex: none; background: #c6d5f2; position: relative; display: block; }
.arrow::after { content: ""; position: absolute; left: 2.500px; top: 2.500px; width: 3.500px; height: 3.500px; border-right: 1.300px solid #243c74; border-bottom: 1.300px solid #243c74; transform: rotate(45deg); }
.combo-off { background: #e9e7da; border-color: #d0cebd; color: #b0aea0; }
.combo-off .arrow { background: #e3e1d3; }
.combo-off .arrow::after { border-color: #aaa; }
.bc { margin-left: 5px; }
.w58 { width: 58px; }
.w59 { width: 59px; }
.w177 { width: 177px; }
.w87 { width: 87px; }
.w94 { width: 94px; }
.w72 { width: 72px; }
.w70 { width: 70px; }
.w95 { width: 95px; }
.ml05 { margin-left: .5px; }
.ml1 { margin-left: 1.250px; }
.ml4 { margin-left: 4px; }
.ml5 { margin-left: 5px; }
.ml7 { margin-left: 7px; }
.li { height: 12px; flex: none; }
.li9 { width: 9.500px; }
.li11 { width: 11px; }
.sw-w { width: 6px; height: 6px; border: 1px solid #222; background: #fff; margin: 0 4px 0 1px; flex: none; }
.z { margin-left: 0; }
.sw-r { width: 6.500px; height: 6.500px; background: #d80000; border: 1px solid #333; margin: 0 3px 0 1px; flex: none; display: inline-block; }
.lt { width: 34px; height: 1px; background: #555; margin: 0 4px 0 2px; flex: none; display: block; }
.lt-s { width: 24px; margin-right: 3px; }

.main { flex: 1; display: flex; min-height: 0; padding-top: 1px; }
.panel { width: 163px; flex: none; font-size: 6.4px; background: #efede1; }
.panel-top { height: 10px; display: flex; align-items: center; padding-left: 5px; padding-top: 3px; }
.pb { width: 7px; font-size: 7px; line-height: 7px; color: #222; font-weight: 700; text-align: center; }
.pbar { width: 134px; height: 3px; border-top: 1px solid #bbb; border-bottom: 1px solid #bbb; margin: 0 1px; }
.panel-sel { height: 25px; display: flex; align-items: flex-start; padding: 4px 0 0 12px; }
.sel { height: 14px; font-size: 6.8px; }
.pbtn { width: 13px; height: 13px; margin-left: 2px; flex: none; }
.pbtn:first-of-type { margin-left: 3px; }

.sec { width: 141px; margin: 0 0 5px 11px; }
.sec-h { margin: 0; height: 10px; font-size: 7px; line-height: 10px; font-weight: 700; color: #fbfaf2; padding-left: 3px; background: #c6c4ad; border-radius: 4px 4px 0 0; position: relative; }
.chev { position: absolute; right: 5px; width: 4px; height: 4px; border-left: 1px solid #fff; border-top: 1px solid #fff; }
.chev::after { content: ""; position: absolute; left: 1px; top: 1px; width: 4px; height: 4px; border-left: 1px solid #fff; border-top: 1px solid #fff; }
.chev-up { top: 3px; transform: rotate(45deg); }
.chev-dn { top: 1px; transform: rotate(225deg); }
.row { height: 10px; margin-left: 10px; display: grid; grid-template-columns: 54px 1fr; font-size: 6.4px; line-height: 9px; }
.k { background: #f0eee2; padding-left: 2px; border-bottom: 1px solid #dcdac8; border-right: 1px solid #dcdac8; white-space: nowrap; overflow: hidden; color: #444; }
.v { background: #fff; padding-left: 1px; border-bottom: 1px solid #dcdac8; display: flex; align-items: center; white-space: nowrap; color: #444; }
.sw-p { margin: 0 3px 0 2px; }
.lt-p { width: 33px; margin: 0 3px 0 3px; }

.work { flex: 1; min-width: 0; display: flex; flex-direction: column; }
.work-top { height: 329px; display: flex; }
.vtools { width: 17px; flex: none; border-left: 1px solid #888; display: flex; flex-direction: column; align-items: center; background: #ece9d8; padding-right: 1px; }
.vhandle { width: 12px; height: 2px; margin-top: 2px; border-top: 1px solid #bbb; border-bottom: 1px solid #fff; flex: none; }
.vg { display: flex; flex-direction: column; flex: none; }
.vic { width: 13px; height: 13px; display: block; flex: none; }
.vg1 { margin-top: 1.500px; }
.vg2 { margin-top: 4px; }
.vg3 { margin-top: 3px; }
.vg4 { margin-top: 4px; }
.vg5 { margin-top: 3px; }
.vg6 { margin-top: 4px; }
.drawing { flex: 1; background: #000; min-width: 0; }
.canvas { display: block; width: 670px; height: 329px; }

.red-lines path { fill: none; stroke: #9c0a0a; stroke-width: 1; }
.blue-line { fill: none; stroke: #0000c8; stroke-width: 1; }
.blue-sq { fill: none; stroke: #0000c8; stroke-width: 1; }
.red-dot { fill: none; stroke: #c00; stroke-width: 1; }
.mag { fill: url(#hatch); }
.mag2 { fill: url(#hatch2); }
.c-green { color: #12e012; stroke-width: 1.700; }
.c-red { color: #e81010; }
.c-white { color: #ececec; stroke-width: 1.050; }
.c-grey { color: #c0c0c0; stroke-width: 1.050; }
.c-dim { color: #5a5a5a; stroke-width: 1.050; }
.gr-arc { fill: none; stroke: #10c010; stroke-width: 1; }
.yel { fill: none; stroke: #dcdc10; stroke-width: 1; }
.yel-w { stroke-width: 1.600; stroke: #f0f000; }
.yel-dash { fill: none; stroke: #c8c810; stroke-width: 2; stroke-dasharray: 1 .8; }
.l-green { fill: none; stroke: #10b010; stroke-width: 1.300; }
.l-cyan { fill: none; stroke: #10d8d8; stroke-width: 1; }
.l-red { fill: none; stroke: #e01010; stroke-width: .9; }
.l-blue { fill: none; stroke: #1010b0; stroke-width: 1; }
.l-green2 { fill: none; stroke: #0a900a; stroke-width: 1; }
.hatchbar { fill: none; stroke: #a4a4a4; stroke-width: 3.500; stroke-dasharray: 1 .7; }
.ucs { fill: none; stroke: #d8d8d8; stroke-width: 1; }
.ray { fill: none; stroke: #3c3c3c; stroke-width: 1; }
.dim { fill: none; stroke: #a0a0a0; stroke-width: .8; }
.dimtxt { fill: none; stroke: #b0b0b0; stroke-width: 2.200; stroke-dasharray: 1 .6; }
.olive { fill: none; stroke: #b0b000; stroke-width: 1; }
.nestfill { fill: url(#nest); }
.nestbox { fill: none; stroke: #10a8a8; stroke-width: 1; }

.tabs { height: 10px; display: flex; align-items: stretch; padding-left: 17px; background: #ece9d8; font-size: 6.5px; }
.tabnav { width: 42px; display: flex; flex: none; margin-right: 5px; }
.navb { flex: 1; display: flex; align-items: center; justify-content: center; border-right: 1px solid #aaa; background: #f4f2e8; }
.tri { width: 0; height: 0; border-top: 2.500px solid transparent; border-bottom: 2.500px solid transparent; display: block; }
.tri-l { border-right: 3px solid #111; }
.tri-r { border-left: 3px solid #111; }
.tri-bar { box-shadow: -2px 0 0 -.5px #111; }
.tri-bar2 { box-shadow: 2px 0 0 -.5px #111; }
.tab { height: 10px; line-height: 9px; text-align: center; color: #222; white-space: nowrap; flex: none; position: relative; z-index: 0; }
.tab-l1::before, .tab-l2::before { content: ""; position: absolute; left: 1px; right: 1px; top: 0; bottom: 0; z-index: -1; background: #f5f3ea; border-left: 1px solid #222; border-right: 1px solid #222; border-bottom: 1px solid #222; transform: skewX(-20deg); }
.tab-model { width: 23px; background: #000; color: #0000e0; clip-path: polygon(0 0, 100% 0, calc(100% - 2px) 100%, 3px 100%); }
.tab-l1 { width: 31px; }
.tab-l2 { width: 30px; }

.cmd { height: 26px; display: flex; position: relative; background: #ece9d8; flex: none; padding: 10px 0 0 10px; }
.cmd::before { content: ""; position: absolute; left: 0; right: 0; top: 3px; height: 3px; border-top: 1px solid #444; border-bottom: 1px solid #f8f6ec; }
.cmd-handle { position: absolute; left: 4px; top: 9px; width: 3px; height: 15px; border-left: 1px solid #bbb; border-right: 1px solid #fff; }
.cmd-box { flex: 1; background: #fff; border-top: 1.500px solid #707070; border-left: 1px solid #707070; font-family: "Liberation Mono", monospace; font-size: 7.7px; font-weight: 700; color: #333; padding: 6px 0 0 1px; line-height: 8px; }

.status { height: 14px; flex: none; display: flex; align-items: center; padding-left: 3px; font-size: 6.3px; color: #444; background: #ece9d8; border-top: 1px solid #dcd9c6; }
.coords { width: 103px; height: 10px; background: #f4f2e6; padding-left: 1px; line-height: 10px; margin-right: 4px; white-space: nowrap; flex: none; }
.sb { height: 11px; line-height: 10px; text-align: center; flex: none; margin-right: 3.800px; white-space: nowrap; }
.sb-on { background: #f6f4ec; border: 1px solid #333; border-right-color: #fff; border-bottom-color: #fff; line-height: 9px; }
.w15 { width: 15px; }
.w16 { width: 16px; }
.w17 { width: 17px; }
.w18 { width: 18px; }
.w22 { width: 22px; }
.w23 { width: 23px; }
.w24 { width: 24px; }
.w25 { width: 25px; }
.w27 { width: 27px; }
.tray-icons { margin-left: auto; display: flex; align-items: center; padding-right: 2px; gap: 1px; }
.ti { width: 11px; height: 11px; flex: none; display: block; }
.drop-t { margin: 0 4px 0 3px; border-top-width: 3px; }
.boxbtn { width: 10px; height: 10px; background: #7fa2d8; border: 1px solid #4e74b0; box-shadow: inset 0 0 0 1px #c4d6f0; display: block; }

.taskbar { height: 17px; flex: none; display: flex; align-items: stretch; background: linear-gradient(#3a78e8 0, #2a62d8 20%, #2258d0 85%, #1a48b0 100%); color: #f4f8ff; font-size: 6.8px; }
.start { width: 57px; display: flex; align-items: center; padding-left: 7px; gap: 3px; background: linear-gradient(#5cae5c, #38963c 30%, #3f9a40 80%, #2c7a2c); border-radius: 0 6px 6px 0; font-size: 10px; font-weight: 700; font-style: italic; color: #fff; flex: none; }
.flag { width: 9px; height: 9px; display: grid; grid-template-columns: 1fr 1fr; gap: 1px; transform: skewY(-6deg); }
.flag b { display: block; }
.f1 { background: #e85a28; }
.f2 { background: #5cc040; }
.f3 { background: #4a88e8; }
.f4 { background: #f0c830; }
.task { width: 94px; margin: 1px 0 0 6px; display: flex; align-items: center; background: #1f50b8; border-radius: 2px; padding-left: 6px; gap: 2px; flex: none; white-space: nowrap; }
.task-ic { width: 10px; height: 10px; flex: none; }
.lang { margin-left: auto; width: 18px; line-height: 17px; color: #cfe0ff; flex: none; }
.tray { width: 47px; flex: none; display: flex; align-items: center; background: linear-gradient(#2a9ae8, #1a88e0); padding-left: 1px; color: #d8ecff; }
.tray-arrow { width: 9px; height: 9px; margin-left: -4px; border-radius: 50%; background: #eef5ff; color: #1a5ad0; line-height: 8px; text-align: center; font-size: 9px; font-weight: 700; flex: none; }
.tray-app { width: 7px; height: 7px; margin: 0 6px 0 2px; background: #d9e4ef; border: 1px solid #55667c; flex: none; }

.tails { position: absolute; left: 0; top: 0; width: 850px; height: 455px; pointer-events: none; }
.tail { fill: #ffffe1; stroke: #222; stroke-width: 1; }
.balloon { position: absolute; top: 376px; height: 44px; background: #ffffe1; border: 1px solid #222; border-radius: 9px; font-size: 6.4px; color: #444; }
.b-back { left: 649px; width: 60px; overflow: hidden; }
.b-front { left: 692px; width: 149px; }
.b-ic { position: absolute; left: 5px; top: 4px; width: 11px; height: 11px; }
.b-title { position: absolute; left: 21px; top: 5px; font-size: 6.900px; font-weight: 700; color: #222; white-space: nowrap; }
.b-msg { position: absolute; left: 9px; top: 18px; white-space: nowrap; }
.b-link { position: absolute; left: 9px; top: 29px; color: #2020e0; text-decoration: underline; white-space: nowrap; }
.b-close { position: absolute; right: 4px; top: 4px; width: 10px; height: 10px; border: 1px solid #888; border-radius: 2px; font-size: 7px; line-height: 8px; text-align: center; color: #222; font-weight: 700; }
```
